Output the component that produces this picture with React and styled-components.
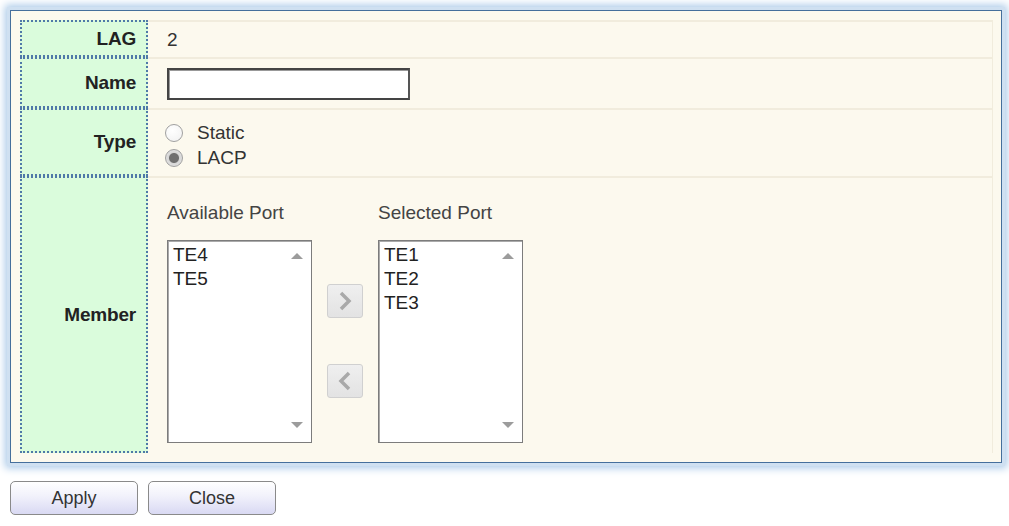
import React from "react";
import styled, { createGlobalStyle } from "styled-components";

const Global = createGlobalStyle`
  html, body { margin: 0; padding: 0; background: #ffffff; }
  body { font-family: "Liberation Sans", Arial, sans-serif; font-size: 19px; color: #333; }
  * { box-sizing: border-box; }
`;

const Page = styled.div`
  padding: 10px 0 0 10px;
  width: 1009px;
  height: 526px;
`;

const Panel = styled.div`
  width: 992px;
  border: 1px solid #456f9c;
  background: #fcf9ee;
  padding: 9px 8px 9px 9px;
  box-shadow: 0 0 0 3px #cfe0f1, 0 0 8px 5px #a9c9e8;
`;

const Table = styled.div`
  display: grid;
  grid-template-columns: 128px 1fr;
  grid-template-rows: 37px 51px 68px 277px;
`;

const Label = styled.div`
  background: #dafcdc;
  border: 2px dotted #4f79a8;
  display: flex;
  align-items: center;
  justify-content: flex-end;
  padding-right: 10px;
  font-weight: bold;
  color: #222;
  letter-spacing: -0.2px;
`;

const Cell = styled.div`
  border-top: 2px solid #f1ecdd;
  border-right: 1px solid #f1ecdd;
  display: flex;
  align-items: center;
  justify-content: flex-start;
  padding-left: 19px;
  color: #333;
`;

const NameInput = styled.div`
  width: 243px;
  height: 32px;
  background: #fff;
  border: 2px solid #444;
  border-right-color: #555;
  box-shadow: inset 1px 1px 0 #999;
`;

const RadioGroup = styled.div`
  display: flex;
  flex-direction: column;
  gap: 3px;
  margin-top: 5px;
`;

const RadioRow = styled.div`
  display: flex;
  align-items: center;
  gap: 14px;
  height: 22px;
  margin-left: -2px;
`;

const RadioDot = styled.span`
  width: 18px;
  height: 18px;
  border-radius: 50%;
  border: 1px solid #a0a0a0;
  background: ${(p) =>
    p.$checked
      ? "radial-gradient(circle, #6f6f6f 0 4.5px, #d6d6d6 5.5px, #ececec 100%)"
      : "radial-gradient(circle at 40% 35%, #ffffff, #f0f0f0)"};
`;

const MemberCell = styled.div`
  border-top: 2px solid #f1ecdd;
  border-right: 1px solid #f1ecdd;
  padding: 24px 0 0 19px;
  display: flex;
  align-items: flex-start;
`;

const PortColumn = styled.div`
  display: flex;
  flex-direction: column;
  gap: 16px;
`;

const PortTitle = styled.div`
  height: 22px;
  line-height: 22px;
  color: #444;
`;

const ListBox = styled.div`
  position: relative;
  width: 145px;
  height: 203px;
  background: #fff;
  border: 1px solid #7c7c7c;
  box-shadow: inset 1px 1px 0 #aaa;
  padding: 2px 0 0 5px;
`;

const Item = styled.div`
  line-height: 24px;
  height: 24px;
  color: #222;
`;

const ScrollArrow = styled.span`
  position: absolute;
  right: 8px;
  ${(p) => (p.$down ? "bottom: 14px;" : "top: 12px;")}
  width: 0;
  height: 0;
  border-left: 6px solid transparent;
  border-right: 6px solid transparent;
  ${(p) => (p.$down ? "border-top: 6px solid #9c9c9c;" : "border-bottom: 6px solid #9c9c9c;")}
`;

const MoveColumn = styled.div`
  width: 66px;
  padding-top: 82px;
  display: flex;
  flex-direction: column;
  align-items: center;
  gap: 46px;
`;

const MoveButton = styled.div`
  width: 36px;
  height: 34px;
  border-radius: 3px;
  background: linear-gradient(#efefef, #e3e3e3);
  border: 1px solid #d0d0d0;
  display: flex;
  align-items: center;
  justify-content: center;
`;

const ButtonBar = styled.div`
  display: flex;
  gap: 10px;
  margin-top: 18px;
`;

const ActionButton = styled.button`
  width: 128px;
  height: 34px;
  border: 1px solid #8a8a8a;
  border-radius: 5px;
  background: linear-gradient(#ffffff 0%, #f1f1fb 45%, #d9d9f3 100%);
  font-family: "Liberation Sans", Arial, sans-serif;
  font-size: 18px;
  color: #333;
  padding: 0;
`;

const Chevron = ({ dir }) => (
  <svg width="18" height="22" viewBox="0 0 18 22">
    <path
      d={dir === "right" ? "M5 3 L13 11 L5 19" : "M13 3 L5 11 L13 19"}
      fill="none"
      stroke="#a9a9a9"
      strokeWidth="3.5"
      strokeLinejoin="miter"
    />
  </svg>
);

const PortList = ({ title, items }) => (
  <PortColumn>
    <PortTitle>{title}</PortTitle>
    <ListBox>
      {items.map((i) => (
        <Item key={i}>{i}</Item>
      ))}
      <ScrollArrow />
      <ScrollArrow $down />
    </ListBox>
  </PortColumn>
);

export default function App() {
  return (
    <Page>
      <Global />
      <Panel>
        <Table>
          <Label>LAG</Label>
          <Cell>2</Cell>
          <Label>Name</Label>
          <Cell>
            <NameInput />
          </Cell>
          <Label>Type</Label>
          <Cell>
            <RadioGroup>
              <RadioRow>
                <RadioDot />
                Static
              </RadioRow>
              <RadioRow>
                <RadioDot $checked />
                LACP
              </RadioRow>
            </RadioGroup>
          </Cell>
          <Label>Member</Label>
          <MemberCell>
            <PortList title="Available Port" items={["TE4", "TE5"]} />
            <MoveColumn>
              <MoveButton>
                <Chevron dir="right" />
              </MoveButton>
              <MoveButton>
                <Chevron dir="left" />
              </MoveButton>
            </MoveColumn>
            <PortList title="Selected Port" items={["TE1", "TE2", "TE3"]} />
          </MemberCell>
        </Table>
      </Panel>
      <ButtonBar>
        <ActionButton>Apply</ActionButton>
        <ActionButton>Close</ActionButton>
      </ButtonBar>
    </Page>
  );
}
